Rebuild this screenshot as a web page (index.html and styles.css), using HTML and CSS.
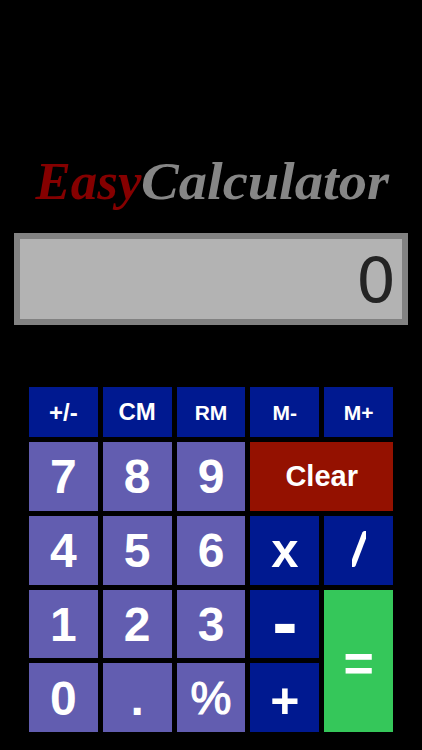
FILE: index.html
```html
<!DOCTYPE html>
<html lang="en">
<head>
<meta charset="utf-8">
<title>EasyCalculator</title>
<link rel="stylesheet" href="styles.css">
</head>
<body>
<main class="calculator">
  <svg class="logo" viewBox="0 0 422 70" role="img" aria-label="EasyCalculator">
    <text class="logo-easy" x="35.5" y="48.5" textLength="106" lengthAdjust="spacingAndGlyphs">Easy</text>
    <text class="logo-calc" x="141" y="49" textLength="248" lengthAdjust="spacingAndGlyphs">Calculator</text>
  </svg>
  <div class="display"><span class="display-value">0</span></div>
  <div class="keypad">
    <button class="key memory sign">+/-</button>
    <button class="key memory large">CM</button>
    <button class="key memory">RM</button>
    <button class="key memory">M-</button>
    <button class="key memory">M+</button>
    <button class="key digit">7</button>
    <button class="key digit">8</button>
    <button class="key digit">9</button>
    <button class="key clear">Clear</button>
    <button class="key digit">4</button>
    <button class="key digit">5</button>
    <button class="key digit">6</button>
    <button class="key operator times">x</button>
    <button class="key operator" aria-label="Divide">
      <svg class="slash" viewBox="0 0 14 36"><path d="M0 36V28.5L10.3 1.5Q10.9 0 12.5 0H14V7.5L3.7 34.5Q3.1 36 1.5 36Z"/></svg>
    </button>
    <button class="key digit">1</button>
    <button class="key digit">2</button>
    <button class="key digit">3</button>
    <button class="key operator minus">-</button>
    <button class="key equals">=</button>
    <button class="key digit">0</button>
    <button class="key digit">.</button>
    <button class="key digit percent">%</button>
    <button class="key operator plus">+</button>
  </div>
</main>
</body>
</html>
```
FILE: styles.css
```css
* { box-sizing: border-box; }
body { margin: 0; background: #000; }
.calculator {
  width: 422px;
  height: 750px;
  padding-top: 150px;
  overflow: hidden;
  background: #000;
}
.logo { display: block; width: 422px; height: 70px; }
.logo text {
  font-family: "Liberation Serif", serif;
  font-size: 53px;
  font-weight: bold;
  font-style: italic;
}
.logo-easy { fill: #850000; }
.logo-calc { fill: #868686; }
.display {
  display: flex;
  align-items: center;
  justify-content: flex-end;
  width: 394.5px;
  height: 92px;
  margin: 13px 0 0 13.7px;
  padding: 3px 6px 0 0;
  border: 6px solid #828282;
  background: #b3b3b3;
}
.display-value {
  font: 63px/77px "DejaVu Sans", sans-serif;
  color: #242424;
}
.keypad {
  display: grid;
  grid-template-columns: repeat(5, 68.8px);
  grid-template-rows: 50px repeat(4, 68.8px);
  gap: 5px;
  margin: 62px 0 0 29px;
}
.key {
  display: flex;
  align-items: center;
  justify-content: center;
  min-width: 0;
  margin: 0;
  padding: 0;
  border: 0;
  border-radius: 0;
  color: #fff;
  font-family: "Liberation Sans", sans-serif;
  font-weight: bold;
  line-height: 1;
}
.memory { background: #001990; font-size: 21px; }
.large { font-size: 24px; }
.sign { font-size: 24px; padding-top: 2px; }
.digit { padding-top: 2px; background: #625db0; font-size: 48px; }
.percent {
  padding-top: 0;
  font-size: 46px;
  font-weight: normal;
  -webkit-text-stroke: 1.2px #fff;
}
.clear {
  grid-column: span 2;
  padding-top: 1px;
  background: #941100;
  font-size: 29px;
}
.operator { background: #001990; font-size: 48px; }
.times { font-size: 49px; padding-top: 1px; }
.slash { width: 14px; height: 36px; margin-top: -3px; fill: #fff; }
.minus { font-size: 76px; padding-bottom: 4px; }
.plus { font-size: 50px; padding-top: 6px; }
.equals {
  grid-column: 5;
  grid-row: 4 / span 2;
  padding-top: 5px;
  background: #35c75a;
  font-size: 52px;
}
```
